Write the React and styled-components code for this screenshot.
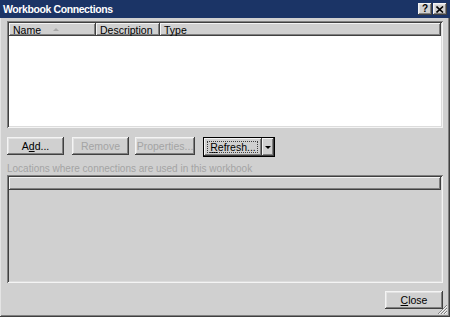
import React from 'react';
import styled, { createGlobalStyle } from 'styled-components';

const GlobalStyle = createGlobalStyle`
  html, body {
    margin: 0;
    padding: 0;
    background: #d0d0d0;
  }
  body {
    font-family: "Liberation Sans", Arial, sans-serif;
    font-size: 10px;
  }
`;

const raised = `
  box-shadow: inset -1px -1px #404040, inset 1px 1px #f4f4f4,
    inset -2px -2px #808080, inset 2px 2px #e2e2e2;
`;

const sunken = `
  box-shadow: inset 1px 1px #808080, inset -1px -1px #f4f4f4,
    inset 2px 2px #404040, inset -2px -2px #dcdcdc;
`;

const Window = styled.div`
  position: relative;
  width: 450px;
  height: 317px;
  box-sizing: border-box;
  background: #d0d0d0;
  display: flex;
  flex-direction: column;
  box-shadow: inset -1px -1px #404040, inset 1px 1px #e4e4e4,
    inset -2px -2px #808080;
`;

const TitleBar = styled.div`
  height: 19px;
  background: #1b3466;
  display: flex;
  align-items: center;
  padding: 0 3px 0 3px;
  color: #fff;
  font-weight: bold;
  font-size: 10.5px;
`;

const Title = styled.span`
  flex: 1;
  letter-spacing: -0.4px;
`;

const CaptionButton = styled.div`
  width: 14px;
  height: 12px;
  margin-left: ${(p) => (p.gap ? '1px' : '0')};
  background: #d0d0d0;
  ${raised}
  color: #000;
  font-size: 10px;
  font-weight: bold;
  display: flex;
  align-items: center;
  justify-content: center;
  line-height: 1;
`;

const Body = styled.div`
  flex: 1;
  display: flex;
  flex-direction: column;
  padding: 3px 7px 8px 7px;
`;

const ListBox = styled.div`
  height: 107px;
  background: #fff;
  ${sunken}
  padding: 2px;
  box-sizing: border-box;
`;

const HeaderRow = styled.div`
  display: flex;
  height: 13px;
`;

const HeaderCell = styled.div`
  width: ${(p) => (p.w ? `${p.w}px` : 'auto')};
  flex: ${(p) => (p.w ? 'none' : '1')};
  background: #d0d0d0;
  box-shadow: inset -1px -1px #404040, inset 1px 1px #f4f4f4,
    inset -2px -2px #808080;
  display: flex;
  align-items: center;
  padding-left: 4px;
  box-sizing: border-box;
  font-size: 10.5px;
  color: #000;
`;

const SortArrow = styled.span`
  margin-left: 12px;
  width: 0;
  height: 0;
  border-left: 3px solid transparent;
  border-right: 3px solid transparent;
  border-bottom: 3px solid #a8a8a8;
`;

const ButtonRow = styled.div`
  display: flex;
  margin-top: 9px;
  height: 18px;
`;

const Button = styled.div`
  width: ${(p) => p.w}px;
  height: 18px;
  margin-right: ${(p) => p.mr || 0}px;
  background: #d0d0d0;
  ${raised}
  display: flex;
  align-items: center;
  justify-content: center;
  font-size: 10.5px;
  color: ${(p) => (p.disabled ? '#a4a4a4' : '#000')};
`;

const DefaultGroup = styled.div`
  display: flex;
  border: 1px solid #000;
  height: 18px;
`;

const SplitMain = styled.div`
  width: 58px;
  height: 18px;
  background: #d0d0d0;
  box-shadow: inset -1px -1px #404040, inset 1px 1px #f4f4f4,
    inset -2px -2px #808080;
  display: flex;
  align-items: center;
  justify-content: center;
  position: relative;
  font-size: 10.5px;
`;

const FocusRing = styled.div`
  position: absolute;
  inset: 3px 4px 3px 3px;
  border: 1px dotted #404040;
`;

const SplitArrow = styled.div`
  width: 12px;
  height: 18px;
  background: #d0d0d0;
  box-shadow: inset -1px -1px #404040, inset 1px 1px #f4f4f4,
    inset -2px -2px #808080;
  display: flex;
  align-items: center;
  justify-content: center;
  &::after {
    content: '';
    border-left: 3px solid transparent;
    border-right: 3px solid transparent;
    border-top: 3px solid #000;
    margin-top: 1px;
  }
`;

const Hint = styled.div`
  margin-top: 8px;
  height: 11px;
  font-size: 10px;
  color: #a4a4a4;
  line-height: 11px;
`;

const UsageBox = styled.div`
  margin-top: 1px;
  height: 108px;
  background: #d0d0d0;
  ${sunken}
  padding: 2px;
  box-sizing: border-box;
`;

const Footer = styled.div`
  display: flex;
  justify-content: flex-end;
  margin-top: 8px;
`;

const Grip = styled.svg`
  position: absolute;
  right: 2px;
  bottom: 2px;
`;

const App = () => {
  return (
    <>
      <GlobalStyle />
      <Window>
        <TitleBar>
          <Title>Workbook Connections</Title>
          <CaptionButton>?</CaptionButton>
          <CaptionButton gap>
            <svg width="8" height="7" viewBox="0 0 8 7">
              <path d="M0.5 0.5 L7 6.5 M7 0.5 L0.5 6.5" stroke="#000" strokeWidth="1.6" />
            </svg>
          </CaptionButton>
        </TitleBar>
        <Body>
          <ListBox>
            <HeaderRow>
              <HeaderCell w={87}>
                Name
                <SortArrow />
              </HeaderCell>
              <HeaderCell w={64}>Description</HeaderCell>
              <HeaderCell>Type</HeaderCell>
            </HeaderRow>
          </ListBox>
          <ButtonRow>
            <Button w={57} mr={8}>
              <span>
                A<u>d</u>d...
              </span>
            </Button>
            <Button w={57} mr={6} disabled>
              Remove
            </Button>
            <Button w={60} mr={8} disabled>
              Properties...
            </Button>
            <DefaultGroup>
              <SplitMain>
                <FocusRing />
                <span>
                  <u>R</u>efresh...
                </span>
              </SplitMain>
              <SplitArrow />
            </DefaultGroup>
          </ButtonRow>
          <Hint>Locations where connections are used in this workbook</Hint>
          <UsageBox>
            <HeaderRow>
              <HeaderCell />
            </HeaderRow>
          </UsageBox>
          <Footer>
            <Button w={58}>
              <span>
                <u>C</u>lose
              </span>
            </Button>
          </Footer>
        </Body>
        <Grip width="11" height="11" viewBox="0 0 11 11">
          <path d="M10 1 L1 10 M10 4 L4 10 M10 7 L7 10" stroke="#808080" strokeWidth="1" />
          <path d="M10 2 L2 10 M10 5 L5 10 M10 8 L8 10" stroke="#f4f4f4" strokeWidth="1" />
        </Grip>
      </Window>
    </>
  );
};

export default App;
